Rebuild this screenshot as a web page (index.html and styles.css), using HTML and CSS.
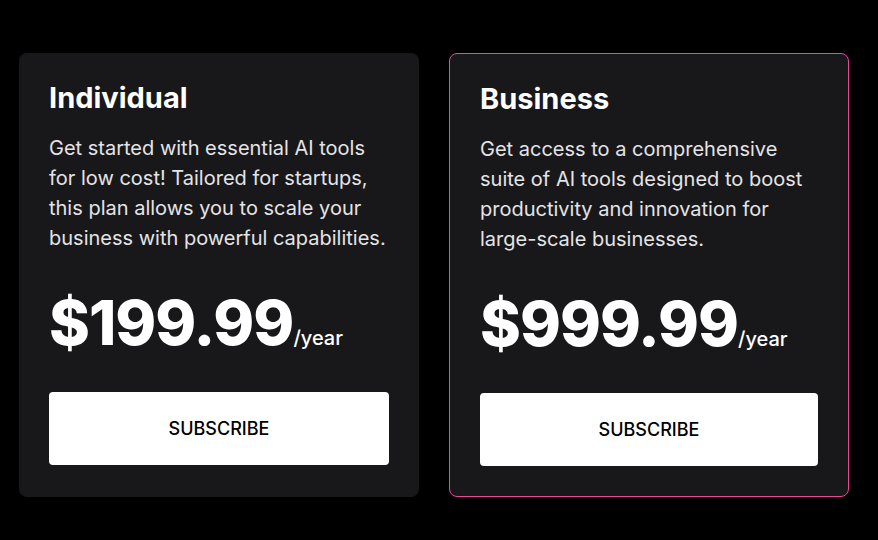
FILE: index.html
```html
<!DOCTYPE html>
<html>
<head>
<meta charset="utf-8">
<link rel="stylesheet" href="styles.css">
</head>
<body>
<div class="plans">
  <div class="card">
    <h2 class="title">Individual</h2>
    <p class="desc">Get started with essential AI tools for low cost! Tailored for startups, this plan allows you to scale your business with powerful capabilities.</p>
    <div class="price"><span class="amount">$199.99</span><span class="per">/year</span></div>
    <button class="btn">SUBSCRIBE</button>
  </div>
  <div class="card featured">
    <h2 class="title">Business</h2>
    <p class="desc">Get access to a comprehensive suite of AI tools designed to boost productivity and innovation for large-scale businesses.</p>
    <div class="price"><span class="amount">$999.99</span><span class="per">/year</span></div>
    <button class="btn">SUBSCRIBE</button>
  </div>
</div>
</body>
</html>
```
FILE: styles.css
```css
html, body {
  margin: 0;
  background: #000;
}
body {
  font-family: Inter, "Noto Sans", sans-serif;
  color: #fff;
}
.plans {
  display: grid;
  grid-template-columns: 400px 400px;
  column-gap: 30px;
  padding: 53px 0 0 19px;
}
.card {
  box-sizing: border-box;
  background: #18181b;
  border-radius: 8px;
  padding: 27px 30px 30px;
  display: flex;
  flex-direction: column;
}
.featured {
  border: 1px solid #ec4899;
}
.title {
  margin: 0;
  font-size: 29px;
  line-height: 36px;
  font-weight: 700;
  color: #fff;
}
.desc {
  margin: 17px 0 0;
  font-size: 20px;
  line-height: 30px;
  color: #e4e4e7;
}
.price {
  margin-top: 38px;
  line-height: 64px;
  white-space: nowrap;
}
.amount {
  font-size: 62px;
  font-weight: 800;
  letter-spacing: -1px;
}
.per {
  font-size: 20px;
  font-weight: 500;
}
.btn {
  margin-top: 21px;
  height: 73px;
  width: 100%;
  background: #fff;
  color: #000;
  border: none;
  border-radius: 4px;
  font-family: Inter, "Noto Sans", sans-serif;
  font-size: 18px;
  font-weight: 500;
}
```
